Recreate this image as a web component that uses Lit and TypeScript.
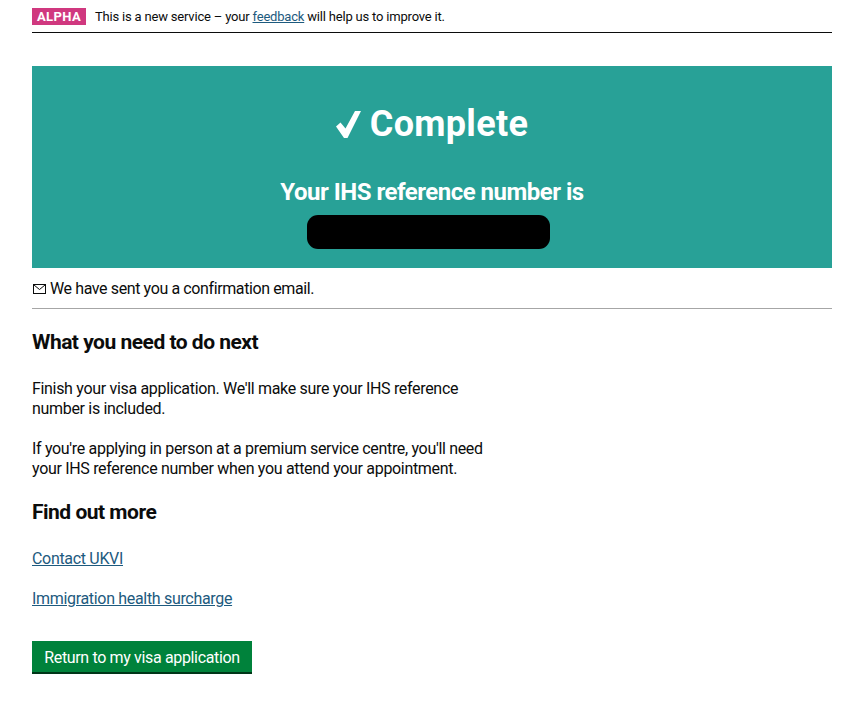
import { LitElement, html, css } from "lit";
import { customElement } from "lit/decorators.js";

@customElement("app-root")
export class AppRoot extends LitElement {
  static styles = css`
    :host {
      display: block;
      padding: 0 23px 0 32px;
      font-family: Roboto, "Liberation Sans", sans-serif;
      font-size: 16px;
      line-height: 20px;
      letter-spacing: -0.32px;
      color: #0b0c0c;
      background: #fff;
    }
    a {
      color: #1d5a7e;
    }
    .phase {
      display: flex;
      align-items: center;
      gap: 9px;
      padding-top: 8px;
      padding-bottom: 7px;
      border-bottom: 1px solid #0b0c0c;
      font-size: 13px;
      line-height: 17px;
      letter-spacing: -0.19px;
    }
    .tag {
      width: 54px;
      height: 17px;
      background: #d0387f;
      color: #fff;
      font-weight: 700;
      font-size: 13px;
      letter-spacing: 0.4px;
      text-align: center;
    }
    .banner {
      display: flex;
      flex-direction: column;
      align-items: center;
      height: 202px;
      margin-top: 33px;
      background: #28a197;
      color: #fff;
      font-weight: 700;
    }
    .complete {
      display: flex;
      align-items: center;
      gap: 9px;
      margin: 37px 0 0;
      font-size: 36px;
      line-height: 42px;
      letter-spacing: 0.3px;
    }
    .complete svg {
      width: 25px;
      height: 27px;
    }
    .ref-label {
      margin-top: 33px;
      font-size: 24px;
      line-height: 28px;
      letter-spacing: -0.5px;
    }
    .redacted {
      width: 243px;
      height: 34px;
      margin: 9px 7px 0 0;
      border-radius: 11px;
      background: #000;
    }
    .sent {
      display: flex;
      align-items: center;
      gap: 4px;
      padding: 11px 0 9px 1px;
      border-bottom: 1px solid #a6a6a6;
      letter-spacing: -0.39px;
    }
    .sent svg {
      width: 13px;
      height: 10px;
    }
    h2 {
      margin: 0;
      font-size: 21px;
      line-height: 24px;
      font-weight: 700;
      letter-spacing: -0.5px;
    }
    .next {
      margin-top: 21px;
    }
    .body {
      width: 470px;
      margin: 20px 0 0;
    }
    .next + .body {
      margin-top: 25px;
    }
    .more {
      margin-top: 21px;
    }
    .links {
      display: flex;
      flex-direction: column;
      align-items: flex-start;
      gap: 20px;
      margin-top: 25px;
    }
    .button {
      display: block;
      width: 220px;
      height: 31px;
      margin-top: 32px;
      padding: 0;
      border: 0;
      border-bottom: 2px solid #003618;
      box-sizing: content-box;
      background: #00823b;
      color: #fff;
      font: inherit;
      line-height: 33px;
      letter-spacing: -0.35px;
      text-align: center;
    }
  `;

  render() {
    return html`
      <div class="phase">
        <span class="tag">ALPHA</span>
        <span>This is a new service – your <a href="#">feedback</a> will help us to improve it.</span>
      </div>

      <section class="banner">
        <h1 class="complete">
          <svg viewBox="0 0 25 27" aria-hidden="true">
            <path d="M0 15.5 L4.5 11.5 L9.5 17.5 L19 0 L25 0 L11.5 27 L8 27 Z" fill="#fff" />
          </svg>
          Complete
        </h1>
        <div class="ref-label">Your IHS reference number is</div>
        <div class="redacted"></div>
      </section>

      <div class="sent">
        <svg viewBox="0 0 13 10" aria-hidden="true">
          <rect x="0.5" y="0.5" width="12" height="9" fill="none" stroke="#0b0c0c" />
          <path d="M1 1 L6.5 5.5 L12 1" fill="none" stroke="#0b0c0c" />
        </svg>
        We have sent you a confirmation email.
      </div>

      <h2 class="next">What you need to do next</h2>
      <p class="body">Finish your visa application. We'll make sure your IHS reference<br />number is included.</p>
      <p class="body">
        If you're applying in person at a premium service centre, you'll need<br />your IHS reference number when you
        attend your appointment.
      </p>

      <h2 class="more">Find out more</h2>
      <div class="links">
        <a href="#">Contact UKVI</a>
        <a href="#">Immigration health surcharge</a>
      </div>

      <button class="button">Return to my visa application</button>
    `;
  }
}
